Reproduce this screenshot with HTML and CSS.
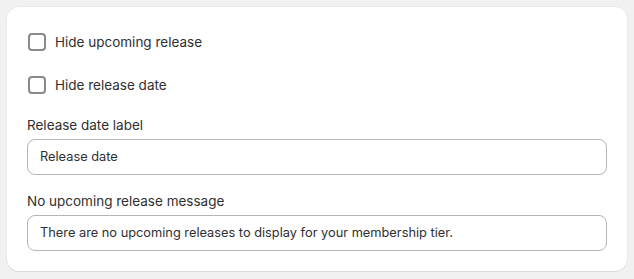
FILE: index.html
```html
<!DOCTYPE html>
<html>
<head>
    <meta charset="UTF-8">
    <meta name="viewport" content="width=device-width, initial-scale=1.0">
    <title>Release settings</title>
    <link rel="stylesheet" href="styles.css">
</head>
<body>
    <div class="card">
        <label class="check-row">
            <span class="check-box"></span>
            <span>Hide upcoming release</span>
        </label>
        <label class="check-row second">
            <span class="check-box"></span>
            <span>Hide release date</span>
        </label>

        <div class="field first-field">
            <div class="field-label">Release date label</div>
            <div class="text-input">Release date</div>
        </div>
        <div class="field">
            <div class="field-label">No upcoming release message</div>
            <div class="text-input">There are no upcoming releases to display for your membership tier.</div>
        </div>
    </div>
</body>
</html>
```

FILE: styles.css
```css
body { margin: 0; padding: 7px; background: #f1f1f1; font-family: Inter, "Noto Sans", sans-serif; font-size: 13.5px; line-height: 20px; color: #303030; }
.card {
    background: #ffffff; border-radius: 12px; padding: 25px 20px 20px;
    box-shadow: 0 1px 0 0 rgba(26,26,26,0.07), 0 0 0 1px rgba(26,26,26,0.03);
}
.check-row { display: flex; align-items: center; gap: 9px; height: 20px; padding-left: 1px; }
.check-row.second { margin-top: 23px; }
.check-box { width: 14px; height: 14px; border: 2px solid #8a8a8a; border-radius: 4px; }
.field { margin-top: 16px; }
.first-field { margin-top: 20px; }
.field-label { margin-bottom: 4px; }
.text-input {
    box-sizing: border-box; height: 36px; border: 1px solid #b5b5b5;
    border-radius: 8px; padding: 0 12px; display: flex; align-items: center;
    font-size: 12.8px; white-space: nowrap; overflow: hidden;
}
```
